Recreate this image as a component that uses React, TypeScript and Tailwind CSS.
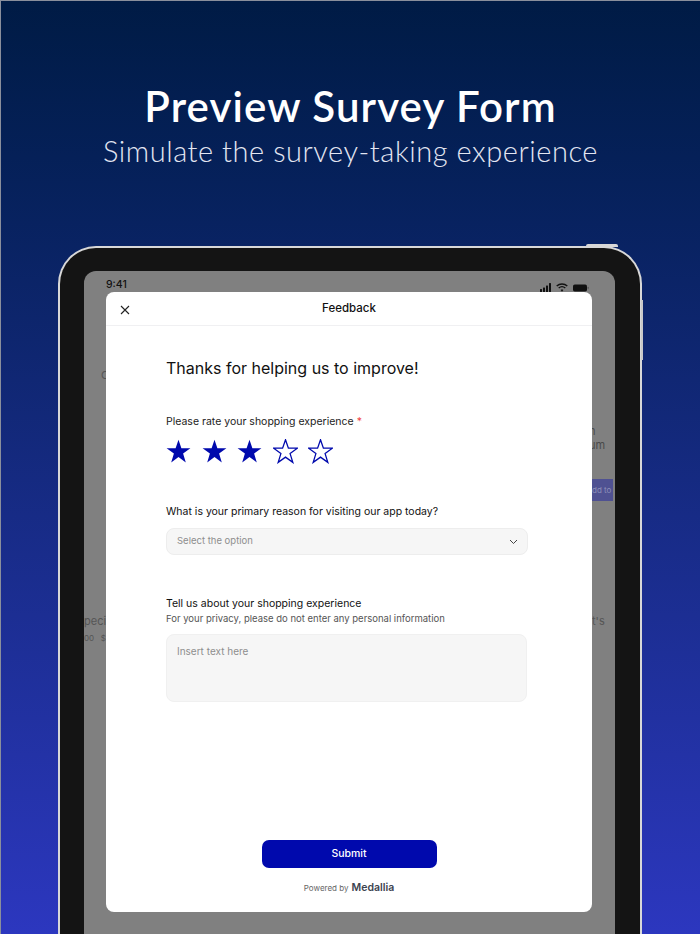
const STAR = "M12.5 0.8 15.4 9.2 24.4 9.2 17.1 14.6 19.8 23.4 12.5 18.1 5.2 23.4 7.9 14.6 0.6 9.2 9.6 9.2Z";

function Star({ filled }: { filled: boolean }) {
  return (
    <svg width="25" height="25" viewBox="0 0 25 25" className="shrink-0">
      <path
        d={STAR}
        fill={filled ? "#0009ad" : "none"}
        stroke="#0009ad"
        strokeWidth={filled ? 0 : 1.3}
      />
    </svg>
  );
}

function StatusIcons() {
  return (
    <div className="flex items-center gap-[4px]">
      <svg width="12" height="9" viewBox="0 0 12 9" fill="#111">
        <rect x="0" y="6" width="2" height="3" rx="0.5" />
        <rect x="3" y="4.5" width="2" height="4.5" rx="0.5" />
        <rect x="6" y="2.5" width="2" height="6.5" rx="0.5" />
        <rect x="9" y="0" width="2" height="9" rx="0.5" />
      </svg>
      <svg width="12" height="9" viewBox="0 0 12 9" fill="none" stroke="#111" strokeWidth="1.4">
        <path d="M0.7 3.1C3.7 0.3 8.3 0.3 11.3 3.1" />
        <path d="M2.7 5.1C4.6 3.4 7.4 3.4 9.3 5.1" />
        <path d="M6 8.8 4.6 7C5.4 6.4 6.6 6.4 7.4 7Z" fill="#111" stroke="none" />
      </svg>
      <svg width="16" height="8" viewBox="0 0 16 8" className="ml-[1px]">
        <rect x="0" y="0.5" width="14" height="7" rx="1.8" fill="#111" />
        <rect x="14.6" y="2.8" width="1" height="2.4" rx="0.5" fill="#555" />
      </svg>
    </div>
  );
}

export default function App() {
  return (
    <div className="relative h-[934px] w-[700px] overflow-hidden border-l border-t border-[#8a8f9c] bg-gradient-to-b from-[#001b45] to-[#2c37bf] font-['Inter',sans-serif]">
      <div className="flex h-[245px] flex-col items-center pt-[81px] text-white">
        <h1 className="font-['Lato',sans-serif] text-[42px] font-semibold leading-[48px] tracking-[1.1px]">
          Preview Survey Form
        </h1>
        <p className="mt-[3px] font-['Lato',sans-serif] text-[29px] font-light leading-[36px] tracking-[0.55px] text-[#e3e6f2]">
          Simulate the survey-taking experience
        </p>
      </div>

      <div className="relative ml-[57px] h-[700px] w-[584px] rounded-t-[38px] border-x-2 border-t-2 border-[#d8d8d8] bg-[#141414] px-[24px] pt-[23px]">
        <div className="absolute right-[22px] top-[-4px] h-[3px] w-[32px] rounded-t-[2px] bg-[#d8d8d8]" />
        <div className="absolute right-[-3px] top-[52px] h-[38px] w-[2px] bg-[#c9c9c9]" />
        <div className="absolute right-[-3px] top-[86px] h-[26px] w-[2px] bg-[#c9c9c9]" />

        <div className="relative h-[700px] w-[531px] rounded-t-[12px] bg-[#808080] px-[22px]">
          <div className="flex h-[21px] items-end justify-between pl-[0px] pr-[4px]">
            <span className="text-[10.5px] font-medium leading-[15px] text-[#111]">9:41</span>
            <StatusIcons />
          </div>

          {/* app behind the sheet */}
          <span className="absolute left-[17px] top-[96px] text-[11px] text-[#555]">C</span>
          <span className="absolute left-[505px] top-[153px] text-[11px] leading-[14px] text-[#4a4a4a]">
            h
            <br />
            um
          </span>
          <div className="absolute left-[508px] top-[208px] flex h-[22px] w-[21px] items-center overflow-hidden bg-[#4f5192] text-[8px] whitespace-nowrap text-[#8d8fb8]">
            dd to c
          </div>
          <span className="absolute left-[508px] top-[342px] text-[11px] text-[#555]">t's</span>
          <span className="absolute left-0 top-[342px] w-[22px] overflow-hidden text-[11px] whitespace-nowrap text-[#555]">
            pecial
          </span>
          <span className="absolute left-0 top-[361px] text-[8px] text-[#555]">00 &nbsp;&nbsp;$</span>

          <div className="relative flex h-[620px] w-[486px] flex-col rounded-[8px] bg-white">
            <div className="relative flex h-[34px] shrink-0 items-center justify-center border-b border-[#f0f0f2]">
              <svg width="10" height="10" viewBox="0 0 10 10" className="absolute left-[14px] top-[13px]" fill="none" stroke="#222" strokeWidth="1.1">
                <path d="M1 1 9 9M9 1 1 9" />
              </svg>
              <span className="text-[11.5px] font-medium text-[#111]">Feedback</span>
            </div>

            <div className="flex flex-1 flex-col px-[60px]">
              <h2 className="mt-[31px] text-[16px] leading-[22px] text-[#111]">
                Thanks for helping us to improve!
              </h2>

              <p className="mt-[35px] text-[10.5px] leading-[16px] text-[#222]">
                Please rate your shopping experience <span className="text-[#ef4444]">*</span>
              </p>
              <div className="mt-[9px] flex gap-[10.5px]">
                <Star filled />
                <Star filled />
                <Star filled />
                <Star filled={false} />
                <Star filled={false} />
              </div>

              <p className="mt-[40px] text-[10.5px] leading-[16px] text-[#111]">
                What is your primary reason for visiting our app today?
              </p>
              <div className="mt-[8px] flex h-[27px] w-[362px] items-center justify-between rounded-[8px] border border-[#ededed] bg-[#f6f6f6] pl-[10px] pr-[9px]">
                <span className="text-[9.5px] text-[#8e8e8e]">Select the option</span>
                <svg width="9" height="6" viewBox="0 0 9 6" fill="none" stroke="#444" strokeWidth="1">
                  <path d="M1 1 4.5 4.5 8 1" />
                </svg>
              </div>

              <p className="mt-[41px] text-[10.5px] leading-[16px] text-[#111]">
                Tell us about your shopping experience
              </p>
              <p className="text-[9.5px] leading-[13px] text-[#555]">
                For your privacy, please do not enter any personal information
              </p>
              <div className="mt-[9px] h-[68px] w-[361px] rounded-[8px] border border-[#f0f0f0] bg-[#f6f6f6] px-[10px] py-[9px] text-[10px] leading-[14px] text-[#8e8e8e]">
                Insert text here
              </div>

              <div className="mt-auto flex flex-col items-center pb-[17px]">
                <button className="h-[28px] w-[175px] rounded-[7px] bg-[#0009ad] text-[10.5px] font-medium text-white">
                  Submit
                </button>
                <div className="mt-[13px] flex items-center gap-[3px] leading-[14px]">
                  <span className="text-[8px] text-[#666]">Powered by</span>
                  <span className="text-[10.5px] font-semibold text-[#3c4350]">Medallia</span>
                </div>
              </div>
            </div>
          </div>
        </div>
      </div>
    </div>
  );
}
